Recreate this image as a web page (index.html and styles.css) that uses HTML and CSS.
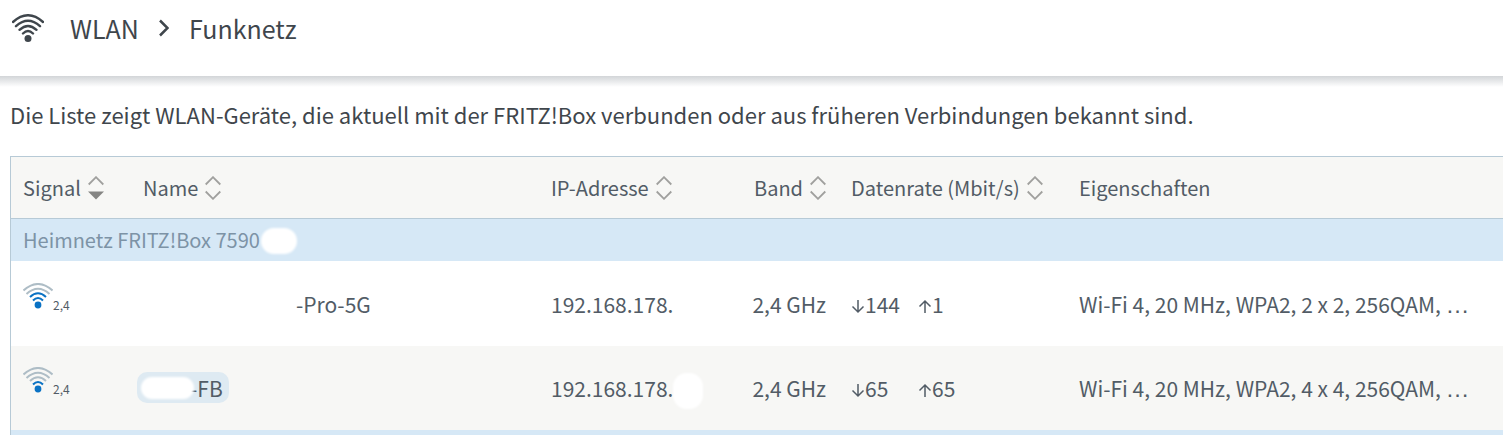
FILE: index.html
```html
<!DOCTYPE html>
<html lang="de">
<head>
  <meta charset="UTF-8" />
  <meta name="viewport" content="width=device-width, initial-scale=1.0" />
  <title>WLAN - Funknetz</title>
  <link rel="stylesheet" href="styles.css">
</head>
<body>
  <svg class="defs" width="0" height="0" aria-hidden="true">
    <symbol id="arrow-down" viewBox="0 0 14 16"><path d="M7 2v12M1.500 8.500L7 14l5.500-5.500" /></symbol>
    <symbol id="arrow-up" viewBox="0 0 14 16"><path d="M7 15V3M1.500 8.500L7 3l5.500 5.500" /></symbol>
    <symbol id="sort" viewBox="0 0 16 24"><path d="M.7 8.500L8 1.200l7.300 7.300M.7 15.500L8 22.800l7.300-7.300" /></symbol>
    <symbol id="sort-desc" viewBox="0 0 16 24"><path d="M.7 8.500L8 1.200l7.300 7.300" /><path class="solid" d="M0 15.500h16L8 23.500z" /></symbol>
  </svg>

  <header class="topbar">
    <svg class="topbar-icon" viewBox="0 0 32 28" aria-hidden="true">
      <path d="M1 8Q16-5.500 31 8M4 12.200Q16 1.500 28 12.200M7.500 15.800Q16 8 24.500 15.800M11 19.500Q16 14.500 21 19.500" />
      <circle cx="16" cy="24.500" r="3.500" />
    </svg>
    <nav class="crumbs">
      <a href="#">WLAN</a>
      <svg class="chevron" viewBox="0 0 10 18" aria-hidden="true"><path d="M1 1.500L8.500 9l-7.500 7.500" /></svg>
      <a href="#">Funknetz</a>
    </nav>
  </header>

  <main class="content">
    <p class="intro">Die Liste zeigt WLAN-Geräte, die aktuell mit der FRITZ!Box verbunden oder aus früheren Verbindungen bekannt sind.</p>

    <table class="devices">
      <colgroup>
        <col class="col-signal">
        <col class="col-name">
        <col class="col-ip">
        <col class="col-band">
        <col class="col-rate">
        <col>
      </colgroup>
      <thead>
        <tr>
          <th><button class="sort">Signal<svg><use href="#sort-desc" /></svg></button></th>
          <th><button class="sort">Name<svg><use href="#sort" /></svg></button></th>
          <th><button class="sort">IP-Adresse<svg><use href="#sort" /></svg></button></th>
          <th class="band"><button class="sort">Band<svg><use href="#sort" /></svg></button></th>
          <th><button class="sort">Datenrate (Mbit/s)<svg><use href="#sort" /></svg></button></th>
          <th>Eigenschaften</th>
        </tr>
      </thead>
      <tbody>
        <tr class="group">
          <td colspan="6">Heimnetz FRITZ!Box 7590<span class="blot blot-net"></span></td>
        </tr>
        <tr class="device">
          <td>
            <div class="signal">
              <svg viewBox="0 0 30 26" aria-hidden="true">
                <path d="M.5 7.500Q15-5.500 29.500 7.500M3.500 11Q15 .5 26.500 11" />
                <path class="on" d="M7 14Q15 6.500 23 14M10 17.500Q15 12.500 20 17.500" />
                <circle cx="15" cy="22" r="3.400" />
              </svg>
              <span>2,4</span>
            </div>
          </td>
          <td><span class="hidden-name"></span>-Pro-5G</td>
          <td>192.168.178.</td>
          <td class="band">2,4 GHz</td>
          <td>
            <div class="rate">
              <span><svg><use href="#arrow-down" /></svg>144</span>
              <span><svg><use href="#arrow-up" /></svg>1</span>
            </div>
          </td>
          <td>Wi-Fi 4, 20 MHz, WPA2, 2 x 2, 256QAM, <span class="more">…</span></td>
        </tr>
        <tr class="device even">
          <td>
            <div class="signal">
              <svg viewBox="0 0 30 26" aria-hidden="true">
                <path d="M.5 7.500Q15-5.500 29.500 7.500M3.500 11Q15 .5 26.500 11M7 14Q15 6.500 23 14" />
                <path class="on" d="M10 17.500Q15 12.500 20 17.500" />
                <circle cx="15" cy="22" r="3.400" />
              </svg>
              <span>2,4</span>
            </div>
          </td>
          <td><span class="pill"><span class="blot blot-name"></span>-FB</span></td>
          <td>192.168.178.<span class="blot blot-ip"></span></td>
          <td class="band">2,4 GHz</td>
          <td>
            <div class="rate">
              <span><svg><use href="#arrow-down" /></svg>65</span>
              <span><svg><use href="#arrow-up" /></svg>65</span>
            </div>
          </td>
          <td>Wi-Fi 4, 20 MHz, WPA2, 4 x 4, 256QAM, <span class="more">…</span></td>
        </tr>
        <tr class="group">
          <td colspan="6"></td>
        </tr>
      </tbody>
    </table>
  </main>
</body>
</html>
```
FILE: styles.css
```css
* {
  box-sizing: border-box;
}

body {
  margin: 0;
  height: 100vh;
  overflow: hidden;
  background: #fff;
  color: #3f464c;
  font-family: "Noto Sans CJK SC", "Noto Sans", sans-serif;
  font-size: 20px;
  line-height: 28px;
}

.defs {
  position: absolute;
}

svg {
  fill: none;
  stroke: currentColor;
}

.topbar {
  display: flex;
  align-items: center;
  gap: 26px;
  height: 76px;
  padding: 0 12px 20px;
}

.topbar-icon {
  width: 32px;
  height: 28px;
  stroke-width: 2.400;
  stroke-linecap: round;
}

.topbar-icon circle {
  fill: currentColor;
  stroke: none;
}

.crumbs {
  display: flex;
  align-items: center;
  gap: 20px;
  font-size: 25px;
}

.crumbs a {
  color: inherit;
  text-decoration: none;
}

.chevron {
  width: 10px;
  height: 18px;
  stroke-width: 2.500;
}

.content {
  padding: 24px 0 0 10px;
  background: linear-gradient(#d2d5d8, #fff 11px);
}

.intro {
  margin: 0 0 28px;
  font-size: 22px;
}

.devices {
  width: 100%;
  table-layout: fixed;
  border-collapse: separate;
  border-spacing: 0;
  border-top: 1px solid #b7cad6;
  border-left: 1px solid #b7cad6;
  color: #525c66;
}

.col-signal {
  width: 120px;
}

.col-name {
  width: 408px;
}

.col-ip {
  width: 200px;
}

.col-band {
  width: 100px;
}

.col-rate {
  width: 228px;
}

th,
td {
  padding: 0 12px;
  font-weight: normal;
  text-align: left;
  white-space: nowrap;
}

th {
  height: 62px;
  background: #f7f7f5;
  border-bottom: 1px solid #b7cad6;
}

.sort {
  display: inline-flex;
  align-items: center;
  gap: 7px;
  padding: 0;
  border: none;
  background: none;
  color: inherit;
  font: inherit;
  cursor: pointer;
}

.sort svg {
  width: 16px;
  height: 24px;
  color: #a0a09e;
  stroke-width: 1.800;
}

.solid {
  fill: #858583;
  stroke: none;
}

.band {
  padding-right: 13px;
  text-align: right;
}

.group td {
  height: 42px;
  background: #d6e8f6;
  color: #7d93a6;
}

.device td {
  height: 85px;
  font-size: 21px;
}

.even td {
  height: 84px;
  background: #f7f7f5;
}

.signal {
  display: flex;
  align-items: flex-end;
  padding-bottom: 16px;
}

.signal svg {
  width: 30px;
  height: 26px;
  color: #aebdc6;
  stroke-width: 2;
}

.signal .on {
  stroke: #0a72c4;
}

.signal circle {
  fill: #0a72c4;
  stroke: none;
}

.signal span {
  height: 14px;
  font-size: 12px;
  line-height: 20px;
}

.hidden-name {
  display: inline-block;
  width: 153px;
}

.rate {
  display: grid;
  grid-template-columns: 67px auto;
}

.rate span {
  display: flex;
  align-items: center;
}

.rate svg {
  width: 14px;
  height: 16px;
  margin-top: 4px;
  stroke-width: 1.500;
}

.more {
  font-family: "Liberation Sans", sans-serif;
  font-size: 24px;
  line-height: 20px;
}

.pill {
  display: inline-flex;
  align-items: center;
  height: 31px;
  margin-left: -6px;
  padding: 0 6px 0 4px;
  border-radius: 10px;
  background: #deeaf2;
}

/* white patches over private data */
.blot {
  display: inline-block;
  background: #fff;
  filter: blur(1px);
  vertical-align: middle;
}

.blot-net {
  width: 36px;
  height: 26px;
  margin: -8px 0 -4px 1px;
  border-radius: 14px;
}

.blot-name {
  width: 53px;
  height: 22px;
  margin-right: -4px;
  border-radius: 11px;
}

.blot-ip {
  width: 30px;
  height: 36px;
  margin: -8px 0;
  border-radius: 14px;
}
```
